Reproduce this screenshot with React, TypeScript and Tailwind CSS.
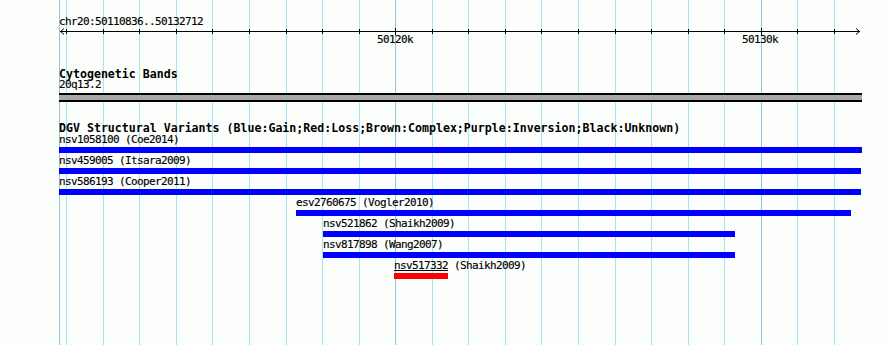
import type { CSSProperties } from "react";

type Variant = { id: string; study: string; start: number; end: number; color: string; marked?: boolean };

const MINOR = [66, 103, 139, 176, 212, 249, 286, 322, 359, 432, 468, 505, 541, 578, 615, 651, 688, 724, 797, 834];
const MAJOR = [59, 395, 761];

const variants: Variant[] = [
  { id: "nsv1058100", study: "Coe2014", start: 59, end: 862, color: "#0000ff" },
  { id: "nsv459005", study: "Itsara2009", start: 59, end: 861, color: "#0000ff" },
  { id: "nsv586193", study: "Cooper2011", start: 59, end: 861, color: "#0000ff" },
  { id: "esv2760675", study: "Vogler2010", start: 296, end: 851, color: "#0000ff" },
  { id: "nsv521862", study: "Shaikh2009", start: 323, end: 735, color: "#0000ff" },
  { id: "nsv817898", study: "Wang2007", start: 323, end: 735, color: "#0000ff" },
  { id: "nsv517332", study: "Shaikh2009", start: 394, end: 448, color: "#ff0000", marked: true },
];

const small =
  "font-['DejaVu_Sans_Mono','Liberation_Mono',monospace] text-[11px] leading-[10px] tracking-[-0.62px] whitespace-pre text-black [-webkit-text-stroke:0.15px_black]";
const bold =
  "font-['DejaVu_Sans_Mono','Liberation_Mono',monospace] text-[11.6px] leading-[12px] font-bold whitespace-pre text-black";

function Grid() {
  return (
    <svg className="absolute inset-0" width={890} height={345}>
      {MINOR.map((x) => (
        <line key={x} x1={x + 0.5} x2={x + 0.5} y1={0} y2={345} stroke="#a3e5f0" />
      ))}
      {MAJOR.map((x) => (
        <line key={x} x1={x + 0.5} x2={x + 0.5} y1={0} y2={345} stroke="#8cc8df" />
      ))}
    </svg>
  );
}

function Ruler() {
  return (
    <div className="pt-[17px]">
      <div className={`${small} pl-[59px]`}>chr20:50110836..50132712</div>
      <svg width={890} height={8} className="block">
        <line x1={60} x2={860} y1={4.5} y2={4.5} stroke="#000" />
        <polyline points="64,1.5 60.5,4.5 64,7.5" fill="none" stroke="#000" />
        <polyline points="856,1.5 859.5,4.5 856,7.5" fill="none" stroke="#000" />
        {MINOR.map((x) => (
          <line key={x} x1={x + 0.5} x2={x + 0.5} y1={2} y2={7} stroke="#000" />
        ))}
        {[395, 761].map((x) => (
          <line key={x} x1={x + 0.5} x2={x + 0.5} y1={1} y2={8} stroke="#000" />
        ))}
      </svg>
      <div className="relative h-[10px]">
        <span className={`${small} absolute left-[377px] top-0`}>50120k</span>
        <span className={`${small} absolute left-[742px] top-0`}>50130k</span>
      </div>
    </div>
  );
}

function VariantRow({ v }: { v: Variant }) {
  const pos: CSSProperties = { marginLeft: v.start };
  return (
    <div className="mt-[3px] first:mt-[1px]">
      <div className={small} style={pos}>
        {v.marked ? <span className="underline decoration-1 underline-offset-[1px]">{v.id}</span> : v.id} ({v.study})
      </div>
      <div className="mt-[2px] h-[6px]" style={{ ...pos, width: v.end - v.start, background: v.color }} />
    </div>
  );
}

export default function App() {
  return (
    <div className="relative h-[345px] w-[890px] overflow-hidden bg-[#fcfefc]">
      <Grid />
      <div className="relative">
        <Ruler />
        <div className="mt-[23px] pl-[59px]">
          <div className={bold}>Cytogenetic Bands</div>
          <div className={small}>20q13.2</div>
          <div className="mt-[3px] h-[9px] w-[803px] border-y-2 border-black bg-[#aaa7aa]" />
        </div>
        <div className={`${bold} mt-[20px] pl-[59px]`}>
          DGV Structural Variants (Blue:Gain;Red:Loss;Brown:Complex;Purple:Inversion;Black:Unknown)
        </div>
        <div>
          {variants.map((v) => (
            <VariantRow key={v.id} v={v} />
          ))}
        </div>
      </div>
    </div>
  );
}
